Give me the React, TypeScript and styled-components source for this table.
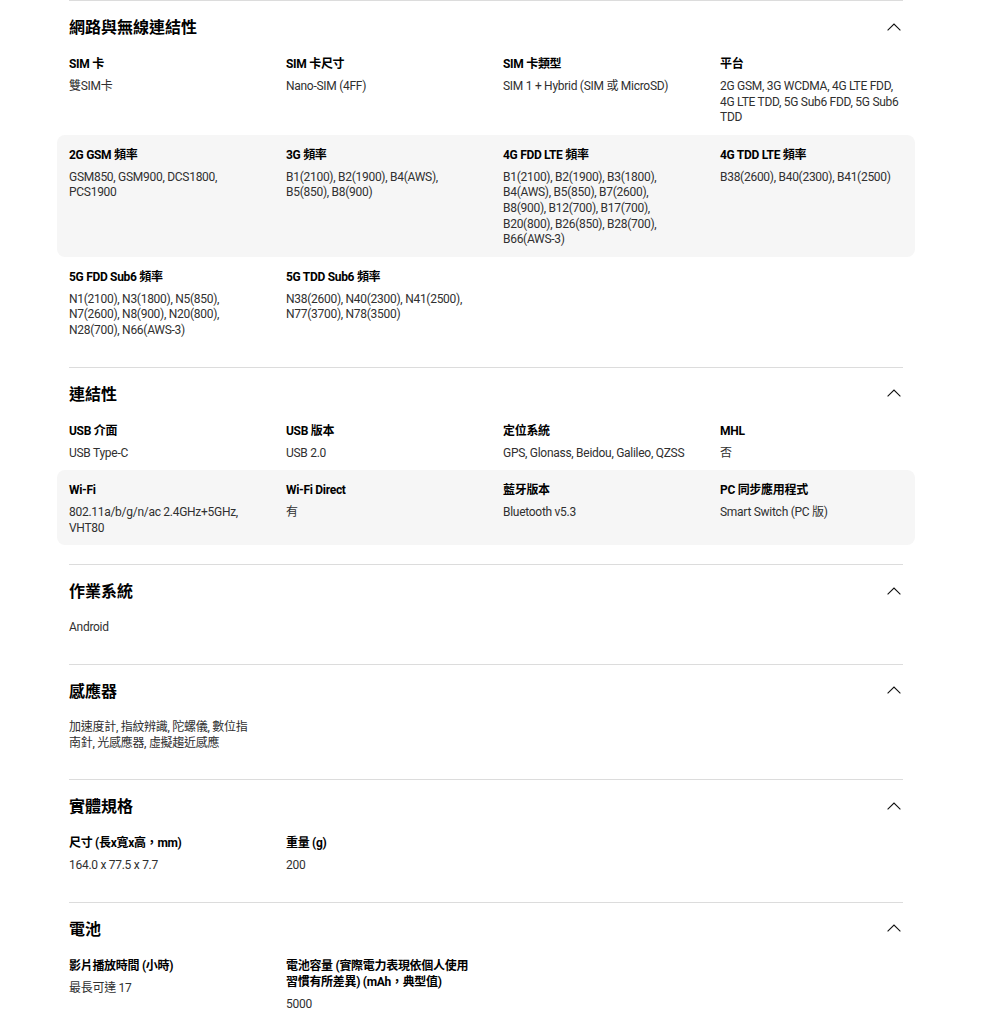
import React from "react";
import styled, { createGlobalStyle } from "styled-components";

const GlobalStyle = createGlobalStyle`
  html, body { margin: 0; padding: 0; background: #fff; }
  body {
    font-family: Roboto, "Noto Sans CJK TC", sans-serif;
    color: #000;
    -webkit-font-smoothing: antialiased;
  }
`;

type Spec = { label?: string; value: string };
type SectionData = { title: string; rows: Spec[][] };

const sections: SectionData[] = [
  {
    title: "網路與無線連結性",
    rows: [
      [
        { label: "SIM 卡", value: "雙SIM卡" },
        { label: "SIM 卡尺寸", value: "Nano-SIM (4FF)" },
        { label: "SIM 卡類型", value: "SIM 1 + Hybrid (SIM 或 MicroSD)" },
        { label: "平台", value: "2G GSM, 3G WCDMA, 4G LTE FDD, 4G LTE TDD, 5G Sub6 FDD, 5G Sub6 TDD" },
      ],
      [
        { label: "2G GSM 頻率", value: "GSM850, GSM900, DCS1800, PCS1900" },
        { label: "3G 頻率", value: "B1(2100), B2(1900), B4(AWS), B5(850), B8(900)" },
        {
          label: "4G FDD LTE 頻率",
          value:
            "B1(2100), B2(1900), B3(1800), B4(AWS), B5(850), B7(2600), B8(900), B12(700), B17(700), B20(800), B26(850), B28(700), B66(AWS-3)",
        },
        { label: "4G TDD LTE 頻率", value: "B38(2600), B40(2300), B41(2500)" },
      ],
      [
        { label: "5G FDD Sub6 頻率", value: "N1(2100), N3(1800), N5(850), N7(2600), N8(900), N20(800), N28(700), N66(AWS-3)" },
        { label: "5G TDD Sub6 頻率", value: "N38(2600), N40(2300), N41(2500), N77(3700), N78(3500)" },
      ],
    ],
  },
  {
    title: "連結性",
    rows: [
      [
        { label: "USB 介面", value: "USB Type-C" },
        { label: "USB 版本", value: "USB 2.0" },
        { label: "定位系統", value: "GPS, Glonass, Beidou, Galileo, QZSS" },
        { label: "MHL", value: "否" },
      ],
      [
        { label: "Wi-Fi", value: "802.11a/b/g/n/ac 2.4GHz+5GHz, VHT80" },
        { label: "Wi-Fi Direct", value: "有" },
        { label: "藍牙版本", value: "Bluetooth v5.3" },
        { label: "PC 同步應用程式", value: "Smart Switch (PC 版)" },
      ],
    ],
  },
  {
    title: "作業系統",
    rows: [[{ value: "Android" }]],
  },
  {
    title: "感應器",
    rows: [[{ value: "加速度計, 指紋辨識, 陀螺儀, 數位指南針, 光感應器, 虛擬趨近感應" }]],
  },
  {
    title: "實體規格",
    rows: [
      [
        { label: "尺寸 (長x寬x高，mm)", value: "164.0 x 77.5 x 7.7" },
        { label: "重量 (g)", value: "200" },
      ],
    ],
  },
  {
    title: "電池",
    rows: [
      [
        { label: "影片播放時間 (小時)", value: "最長可達 17" },
        { label: "電池容量 (實際電力表現依個人使用習慣有所差異) (mAh，典型值)", value: "5000" },
      ],
    ],
  },
];

const Page = styled.main`
  width: 834px;
  padding-left: 69px;
`;

const Section = styled.section`
  border-top: 1px solid #dcdcdc;
  padding-bottom: 19px;
`;

const Header = styled.div`
  display: flex;
  align-items: center;
  justify-content: space-between;
  padding: 14px 0 7px;
`;

const Title = styled.h2`
  margin: 0;
  font-family: "Noto Sans CJK TC", sans-serif;
  font-size: 16px;
  line-height: 22px;
  font-weight: 700;
  color: #000;
`;

const Toggle = styled.button`
  display: flex;
  align-items: center;
  justify-content: center;
  width: 16px;
  height: 16px;
  margin-top: 1px;
  margin-right: 1px;
  padding: 0;
  border: 0;
  background: none;
  cursor: pointer;
`;

const Row = styled.div<{ $shaded: boolean }>`
  display: grid;
  grid-template-columns: repeat(4, 1fr);
  column-gap: 34px;
  margin: 0 -12px;
  padding: 12px 12px 9px;
  border-radius: 8px;
  background: ${(p) => (p.$shaded ? "#f6f6f6" : "transparent")};
`;

const Item = styled.div`
  display: flex;
  flex-direction: column;
  gap: 7px;
  min-width: 0;
`;

const Label = styled.div`
  font-family: Roboto, "Noto Sans CJK TC", sans-serif;
  font-size: 12px;
  line-height: 16px;
  font-weight: 700;
  letter-spacing: -0.3px;
  color: #000;
`;

const Value = styled.div`
  font-family: Roboto, "Noto Sans CJK TC", sans-serif;
  font-size: 12px;
  line-height: 15.6px;
  font-weight: 400;
  letter-spacing: -0.28px;
  color: #303030;
`;

const Chevron = () => (
  <svg width="14" height="8" viewBox="0 0 14 8" fill="none">
    <polyline points="0.6,7.4 7,1 13.4,7.4" stroke="#111" strokeWidth="1.1" />
  </svg>
);

export default function App() {
  return (
    <>
      <GlobalStyle />
      <Page>
        {sections.map((s) => (
          <Section key={s.title}>
            <Header>
              <Title>{s.title}</Title>
              <Toggle aria-label="收合">
                <Chevron />
              </Toggle>
            </Header>
            {s.rows.map((row, i) => (
              <Row key={i} $shaded={i % 2 === 1}>
                {row.map((it, j) => (
                  <Item key={j}>
                    {it.label && <Label>{it.label}</Label>}
                    <Value>{it.value}</Value>
                  </Item>
                ))}
              </Row>
            ))}
          </Section>
        ))}
      </Page>
    </>
  );
}
